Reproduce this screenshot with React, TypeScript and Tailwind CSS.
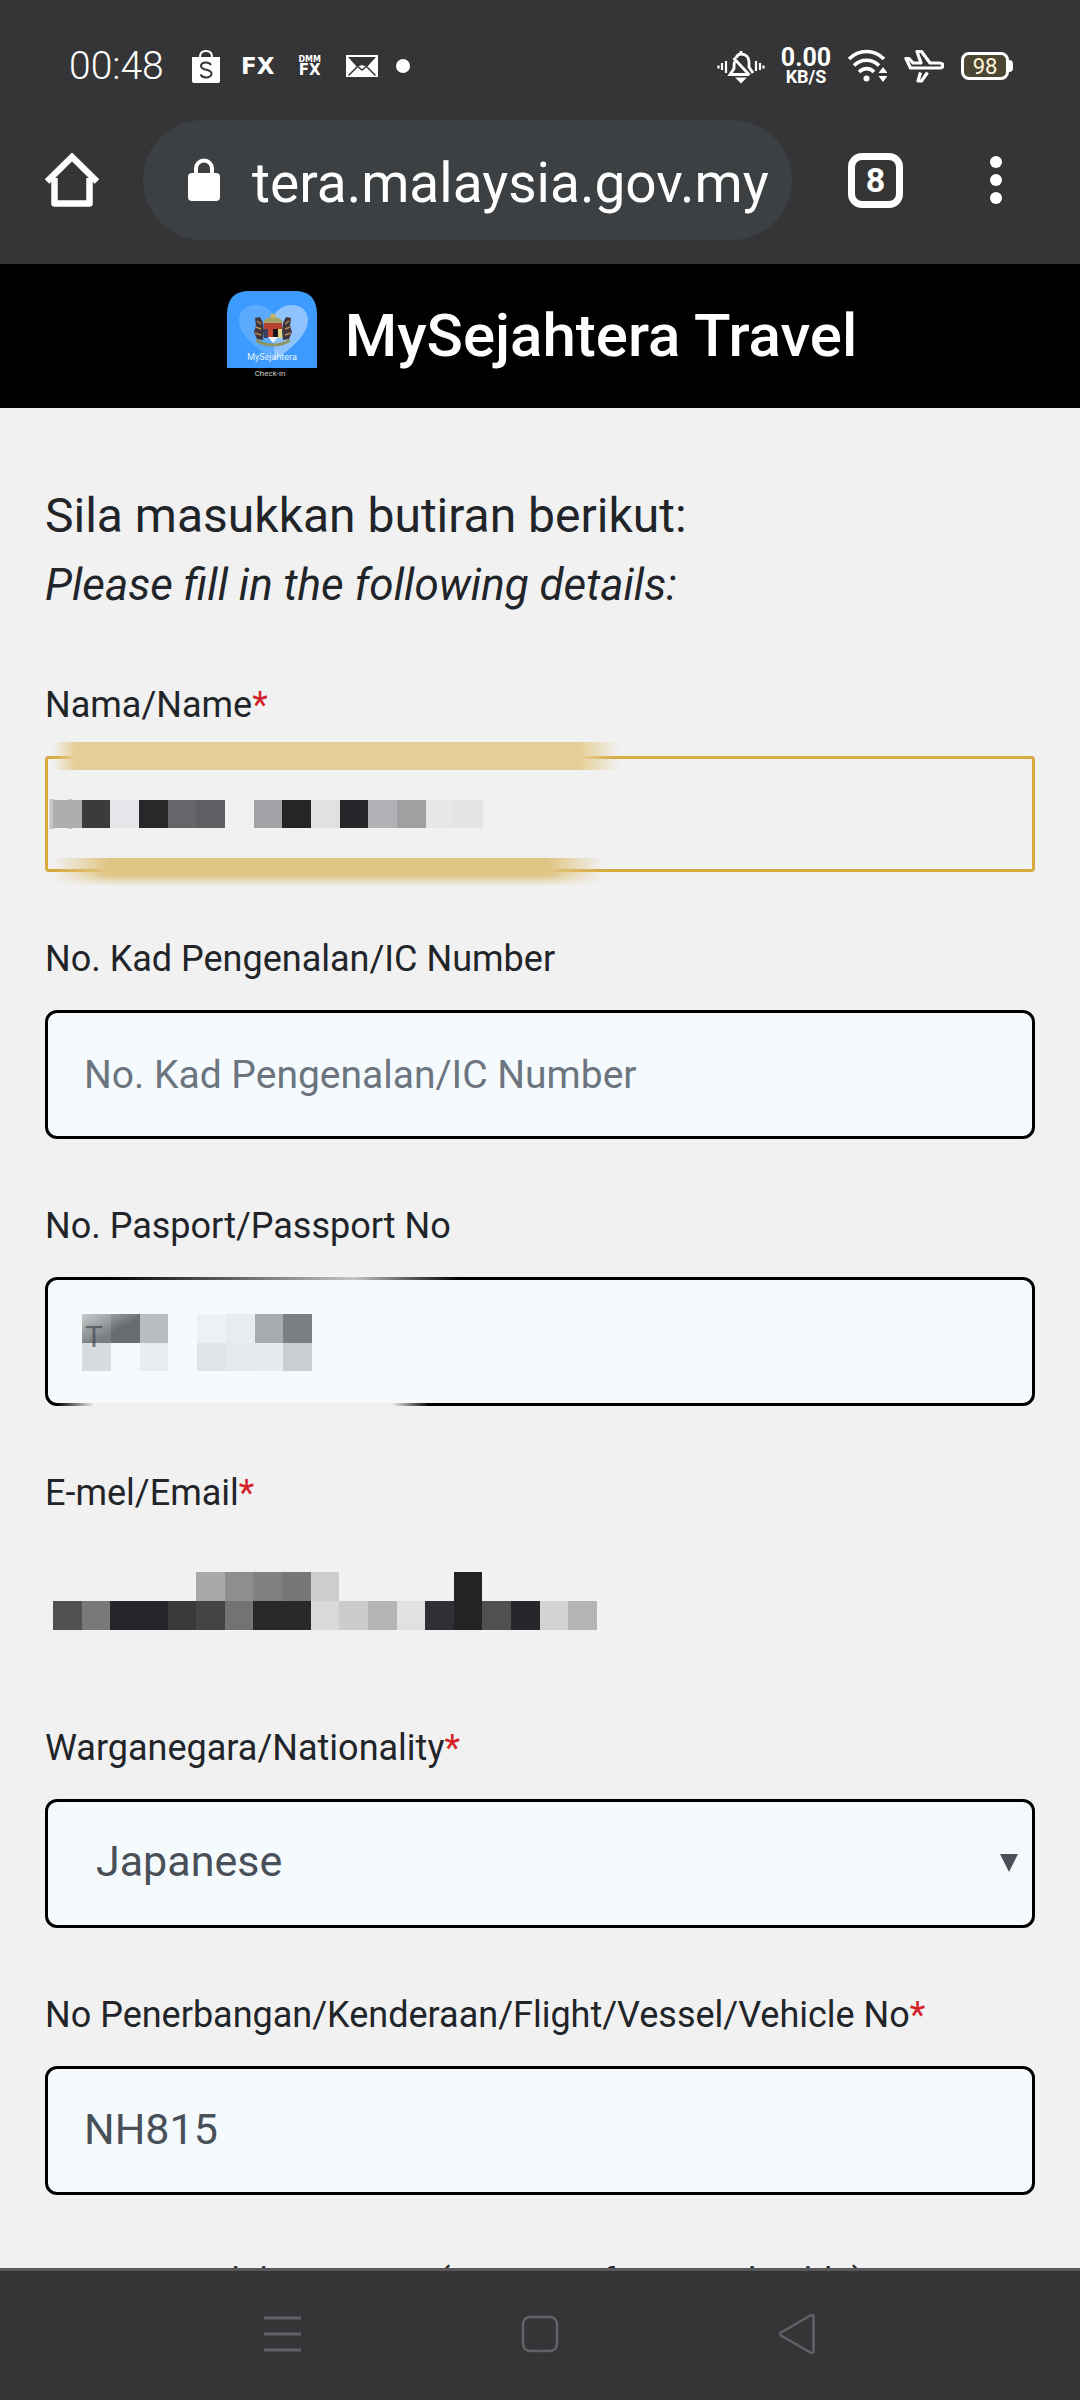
import type { ReactNode } from "react";

const nameCells = [
  ["#aeaeae", "#3a3b3c", "#e5e6ea", "#27282a", "#656669", "#5f6064", "", "#a2a3a7", "#242527", "#e1e1e1", "#25262a", "#b0b2b6", "#9fa0a1", "#e6e7e8", "#e3e4e4"],
];

const passportCells = [
  ["#7b7f82", "#686c6f", "#b9bdc0", "", "#eef1f4", "#e8ebf0", "#a8acb0", "#7b7f82"],
  ["#d8dce0", "#f5f8fc", "#e9edf0", "", "#e0e4e7", "#e6eaed", "#e7ebee", "#cacdd1"],
];

const emailCells = [
  ["", "", "", "", "", "#a9a9aa", "#8e8e8f", "#7f8081", "#767778", "#cccdce", "", "", "", "", "#222324", "", "", "", ""],
  ["#4f5152", "#787a79", "#252429", "#25252a", "#383939", "#434445", "#727375", "#27282a", "#27282a", "#d8d9db", "#cbcccd", "#b3b4b6", "#e1e1e1", "#2f3034", "#222324", "#4f5052", "#26272a", "#d3d3d3", "#b3b4b6"],
];

function Mosaic({ rows, className }: { rows: string[][]; className: string }) {
  return (
    <svg
      className={className}
      viewBox={`0 0 ${rows[0].length} ${rows.length}`}
      preserveAspectRatio="none"
      shapeRendering="crispEdges"
      aria-hidden="true"
    >
      {rows.map((row, y) =>
        row.map((fill, x) => fill && <rect key={`${x}-${y}`} x={x} y={y} width="1" height="1" fill={fill} />)
      )}
    </svg>
  );
}

function Field({ id, label, required, children }: { id: string; label: string; required?: boolean; children?: ReactNode }) {
  return (
    <div className="mb-[60px]">
      <label htmlFor={id} className="block text-4xl leading-[54px] mb-6 whitespace-nowrap">
        {label}
        {required && <span className="text-[#d3222a]">*</span>}
      </label>
      <div className="relative">{children}</div>
    </div>
  );
}

const boxClass =
  "block w-full h-[129px] pb-1 rounded-xl border-[3px] border-black bg-[#f5faff] text-[43px] text-[#495057] outline-none";

function StatusBar() {
  return (
    <div className="flex items-center justify-between h-[120px] pt-3 pl-[69px] pr-[67px]">
      <div className="flex items-center gap-4">
        <span className="text-[39px] leading-none font-light mr-2">00:48</span>
        <svg className="w-9 h-9" viewBox="0 0 36 36" fill="none" aria-hidden="true">
          <path d="M4 9h28v24a2 2 0 0 1-2 2H6a2 2 0 0 1-2-2z" fill="#fff" />
          <path d="M12 9c0-4 2.500-6 6-6s6 2 6 6" stroke="#fff" strokeWidth="2" />
          <path d="M23 17c-1-2-3-2.500-5-2.500-3 0-5 1.200-5 3.500 0 5 10.500 2.500 10.500 7.500 0 2.500-2.500 4-5.500 4-2.500 0-4.500-1-5.500-3" stroke="#353538" strokeWidth="2" />
        </svg>
        <span className="w-9 text-center font-['DejaVu_Sans'] text-[23px] leading-none font-bold">FX</span>
        <span className="w-9 flex flex-col items-center font-['DejaVu_Sans'] font-bold">
          <span className="text-[8px] leading-[8px]">DMM</span>
          <span className="text-[15px] leading-[13px]">FX</span>
        </span>
        <svg className="w-9 h-9" viewBox="0 0 36 36" fill="none" aria-hidden="true">
          <path d="M2 7h32v22H2z" fill="#fff" />
          <path d="M4 9h28l-9 10-5-2-5 2z" fill="#353538" />
          <path d="M13 19 4.500 27.500M23 19l8.500 8.500" stroke="#353538" strokeWidth="1.500" />
          <path d="m13 18 5 4 5-4" fill="#fff" />
          <path d="m13 18 5 4 5-4" stroke="#353538" strokeWidth="1.500" />
        </svg>
        <span className="w-3.5 h-3.5 rounded-full bg-white" />
      </div>

      <div className="flex items-center gap-[17px]">
        <svg className="w-12 h-9" viewBox="0 0 48 36" fill="none" stroke="#fff" strokeWidth="2.800" aria-hidden="true">
          <path d="M19 10c1-2.500 2.500-4 5-4 5 0 8 3.500 8 8v5l4 6M17.500 13.500c-.5 2-.5 5-.5 7L13 26.500h19M16.500 10l16 17" />
          <path d="M24 3v3M21.500 31h5L24 33.500z" />
          <path d="M9 13v12M5 15v7M1.500 17.500v3M39 13v10M43 15v7M46.500 17.500v3" strokeWidth="2.200" />
        </svg>
        <span className="w-12 flex flex-col items-center font-bold">
          <span className="text-[25px] leading-[21px]">0.00</span>
          <span className="text-[18px] leading-[18px]">KB/S</span>
        </span>
        <svg className="w-10 h-9" viewBox="0 0 40 36" fill="none" stroke="#fff" strokeWidth="3.600" aria-hidden="true">
          <path d="M2 11C12 1 27 1 37 11M7 17.500c7-7 18-7 25 0M12 24c4.500-4.500 11-4.500 15 0" />
          <circle cx="19.500" cy="30.500" r="3" fill="#fff" stroke="none" />
          <path d="m31.500 25 4.500-6 4.500 6zM31.500 28l4.500 6 4.500-6z" fill="#fff" stroke="none" />
        </svg>
        <svg className="w-10 h-9" viewBox="0 0 40 36" fill="none" stroke="#fff" strokeWidth="3.200" strokeLinejoin="round" aria-hidden="true">
          <path d="M2 10.500h3l4 4.500h8L13 3.500h4.500L26 15h9c3 0 4 1.500 4 2.500S38 20 35 20H6.500z" />
          <path d="M16.500 24.500 14 33h3.500l6-8.500" />
        </svg>
        <span className="flex items-center">
          <span className="w-12 h-7 rounded-lg border-[3px] border-white bg-[#4c4733] text-center text-[22px] leading-[23px] text-[#fff6dc]">
            98
          </span>
          <span className="w-1 h-3 rounded-r bg-white" />
        </span>
      </div>
    </div>
  );
}

function Toolbar() {
  return (
    <div className="flex items-center pl-[45px] pr-[78px] pb-6">
      <button type="button" aria-label="Home" className="mr-11">
        <svg className="w-[54px] h-[54px]" viewBox="0 0 54 54" fill="none" stroke="#fff" strokeWidth="6.500" strokeLinejoin="round">
          <path d="M9.500 25v25.500h35V25" />
          <path d="M2 28.500 27 4l25 24.500" strokeLinejoin="miter" />
        </svg>
      </button>
      <div className="flex-1 min-w-0 flex items-center gap-8 h-[120px] pl-[45px] rounded-full bg-[#3c4042]">
        <svg className="w-8 h-11 shrink-0" viewBox="0 0 32 44" aria-hidden="true">
          <rect y="15" width="32" height="28" rx="4" fill="#fff" />
          <path d="M8 16v-5.500a8 8 0 0 1 16 0V16" fill="none" stroke="#fff" strokeWidth="4" />
        </svg>
        <input
          aria-label="Address"
          readOnly
          value="tera.malaysia.gov.my"
          className="flex-1 min-w-0 pt-1.5 bg-transparent text-[55px] leading-none h-20 outline-none"
        />
      </div>
      <button
        type="button"
        aria-label="Tabs"
        className="ml-14 w-[55px] h-[55px] rounded-[14px] border-[7px] border-white text-[34px] leading-none font-bold flex items-center justify-center"
      >
        8
      </button>
      <button type="button" aria-label="Menu" className="ml-[87px] flex flex-col gap-1.5">
        <span className="w-3 h-3 rounded-full bg-white" />
        <span className="w-3 h-3 rounded-full bg-white" />
        <span className="w-3 h-3 rounded-full bg-white" />
      </button>
    </div>
  );
}

function Logo() {
  return (
    <svg className="w-[90px] h-[90px]" viewBox="0 0 90 90" aria-hidden="true">
      <path d="M0 77V22Q1 0 22 0h46q21 0 22 22v55z" fill="#3d9bff" />
      <path d="M47 70C28 56 12 44 12 29c0-18 26-20 35-5z" fill="#5baaff" />
      <path d="M47 70c19-14 34-27 34-41 0-18-25-20-34-5z" fill="#8fc3ff" />
      {/* coat of arms */}
      <path d="M37 29q9-7 18 0v3H37z" fill="#a5a468" />
      <circle cx="46" cy="25" r="2.500" fill="#c9b45a" />
      <path d="M28 27l5-1 3 6 1 8-1 9-6-1-3-7 2-6z" fill="#41353c" />
      <path d="M64 27l-5-1-3 6-1 8 1 9 6-1 3-7-2-6z" fill="#41353c" />
      <path d="M30 30l4 3M29 36l5 2M28 42l6 2M62 30l-4 3M63 36l-5 2M64 42l-6 2" stroke="#b98a52" strokeWidth="1.500" />
      <path d="M37 32h18v6H37z" fill="#b9402f" />
      <path d="M37 38h4v9h-4z" fill="#39405f" />
      <path d="M41 38h5v8h-5z" fill="#c8452f" />
      <path d="M46 38h5v8h-5z" fill="#16161a" />
      <path d="M51 38h4v9h-4z" fill="#e6d382" />
      <path d="M41 46h10l-5 6z" fill="#f4f4f4" />
      <path d="M29 49q7 5 17 5t17-5" fill="none" stroke="#8c9663" strokeWidth="3" />
      <text x="45" y="69" textAnchor="middle" fontSize="9" fill="#e4f3ff" fontFamily="Roboto">MySejahtera</text>
      <text x="43" y="85" textAnchor="middle" fontSize="8" fill="#d0d0d0" fontFamily="Roboto">Check-in</text>
    </svg>
  );
}

export default function App() {
  return (
    <div className="h-screen flex flex-col bg-[#f1f1f1] font-['Roboto',sans-serif] text-[#212529]">
      <div className="shrink-0 bg-[#353538] text-white">
        <StatusBar />
        <Toolbar />
      </div>

      <header className="shrink-0 h-36 flex items-center justify-center gap-7 pl-1 bg-black text-white">
        <Logo />
        <h1 className="text-[60px] leading-none font-medium">MySejahtera Travel</h1>
      </header>

      <main className="flex-1 min-h-0 overflow-y-auto [scrollbar-width:none] px-[45px] pt-[72px]">
        <h2 className="text-5xl leading-[72px]">Sila masukkan butiran berikut:</h2>
        <p className="text-[44px] leading-[66px] italic mb-[60px]">Please fill in the following details:</p>

        <form>
          <Field id="name" label="Nama/Name" required>
            <input id="name" className="block w-full h-[116px] border-[3px] border-[#d6a941] rounded bg-transparent px-2 outline-none" />
            <div className="absolute left-2 -top-3.5 w-[566px] h-7 bg-[#e6cf97] mask-l-from-96% mask-l-to-100% mask-r-from-93% mask-r-to-100%" />
            <div className="absolute left-2 -bottom-3.5 w-[550px] h-7 bg-[#dfc483] mask-x-from-90% mask-x-to-100% mask-b-from-60% mask-b-to-100%" />
            <svg className="absolute left-0 top-9 w-12 h-10" viewBox="0 0 48 40" aria-hidden="true">
              <text x="1" y="37" fontSize="42" fill="#c4c6c8" fontFamily="Roboto">N</text>
            </svg>
            <Mosaic rows={nameCells} className="absolute left-2 top-11 w-[430px] h-7" />
          </Field>

          <Field id="ic" label="No. Kad Pengenalan/IC Number">
            <input
              id="ic"
              placeholder="No. Kad Pengenalan/IC Number"
              className={`${boxClass} px-9 placeholder:text-[39px] placeholder:text-[#6c757d]`}
            />
          </Field>

          <Field id="passport" label="No. Pasport/Passport No">
            <input id="passport" className={`${boxClass} px-9`} />
            <div className="absolute left-16 top-0 w-[350px] h-[3px] bg-linear-to-r from-transparent via-[#c4c4c4] via-70% to-transparent" />
            <div className="absolute left-3 bottom-0 w-[372px] h-[3px] bg-[#f1f1f1] mask-x-from-90% mask-x-to-100%" />
            <Mosaic rows={passportCells} className="absolute left-[37px] top-[37px] w-[230px] h-[57px]" />
            <svg className="absolute left-[37px] top-[37px] w-14 h-10" viewBox="0 0 56 40" aria-hidden="true">
              <defs>
                <linearGradient id="shine" x2="1" y2="1">
                  <stop stopColor="#fff" stopOpacity=".6" />
                  <stop offset=".6" stopColor="#fff" stopOpacity="0" />
                </linearGradient>
              </defs>
              <path d="M0 0h56v28H0z" fill="url(#shine)" />
              <text x="3" y="33" fontSize="30" fill="#44484b" fillOpacity=".7" fontFamily="Roboto">T</text>
            </svg>
          </Field>

          <Field id="email" label="E-mel/Email" required>
            <input id="email" type="email" className="block w-full h-[117px] bg-transparent outline-none" />
            <Mosaic rows={emailCells} className="absolute left-2 top-7 w-[544px] h-[58px]" />
          </Field>

          <Field id="nationality" label="Warganegara/Nationality" required>
            <select id="nationality" className={`${boxClass} appearance-none pl-12`}>
              <option>Japanese</option>
            </select>
            <svg className="absolute right-[17px] top-[55px] w-[18px] h-[18px] pointer-events-none" viewBox="0 0 18 18" aria-hidden="true">
              <path d="M0 0h18L9 18z" fill="#495057" />
            </svg>
          </Field>

          <Field id="flight" label="No Penerbangan/Kenderaan/Flight/Vessel/Vehicle No" required>
            <input id="flight" defaultValue="NH815" className={`${boxClass} px-9`} />
          </Field>

          <Field id="seat" label="Tempat Duduk/Seat No. (Bersama from applicable)">
            <input id="seat" className={`${boxClass} px-9`} />
          </Field>
        </form>
      </main>

      <nav className="shrink-0 h-[132px] pb-1 flex items-center justify-center border-t-[3px] border-[#59595c] bg-[#353538]">
        <button type="button" aria-label="Recent apps" className="w-[258px] flex justify-center">
          <svg className="w-10 h-10" viewBox="0 0 40 40" fill="none" stroke="#626366" strokeWidth="3">
            <path d="M2 4h37M2 20h37M2 36h37" />
          </svg>
        </button>
        <button type="button" aria-label="Home screen" className="w-[258px] flex justify-center">
          <svg className="w-10 h-10" viewBox="0 0 40 40" fill="none" stroke="#626366" strokeWidth="2.500">
            <rect x="3" y="3" width="34" height="34" rx="7" />
          </svg>
        </button>
        <button type="button" aria-label="Back" className="w-[258px] flex justify-center">
          <svg className="w-10 h-10" viewBox="0 0 40 40" fill="none" stroke="#626366" strokeWidth="2.500" strokeLinejoin="round">
            <path d="M35.500 1.500v37q-1.500 1-3 0L3 21.500q-1.500-1.500 0-3l29.500-17q1.500-1 3 0z" />
          </svg>
        </button>
      </nav>
    </div>
  );
}
